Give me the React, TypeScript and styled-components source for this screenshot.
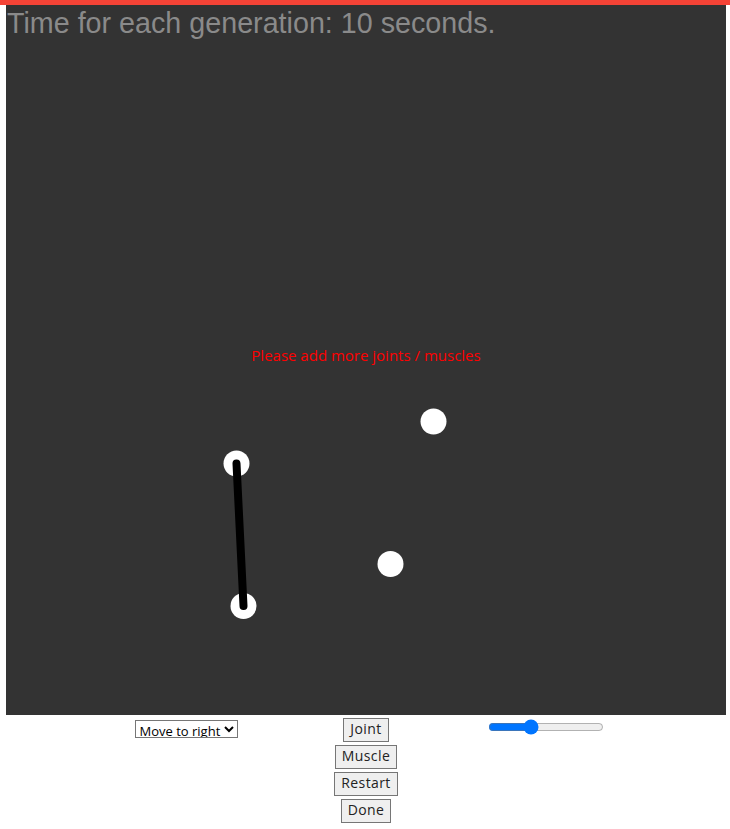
import React, { useState } from 'react';
import styled, { createGlobalStyle } from 'styled-components';

const GlobalStyle = createGlobalStyle`
  html, body {
    margin: 0;
    padding: 0;
    background: #fff;
  }
`;

interface IJoint {
  x: number;
  y: number;
}

// canvas coordinates (stage origin is at page 6,5)
const joints: IJoint[] = [
  { x: 230.5, y: 458.5 },
  { x: 237.5, y: 601 },
  { x: 427.5, y: 416.5 },
  { x: 384.5, y: 559 },
];

const muscles: [number, number][] = [[0, 1]];

export default function App(): JSX.Element {
  const [goal, setGoal] = useState('right');
  const [speed, setSpeed] = useState(35);

  return (
    <Page>
      <GlobalStyle />
      <TopBar />
      <StageWrapper>
        <Stage>
          <Drawing width={720} height={710}>
            {joints.map((j, i) => (
              <circle key={i} cx={j.x} cy={j.y} r={13} fill="#fff" />
            ))}
            {muscles.map(([a, b]) => (
              <line
                key={`${a}-${b}`}
                x1={joints[a].x}
                y1={joints[a].y}
                x2={joints[b].x}
                y2={joints[b].y}
                stroke="#000"
                strokeWidth={8}
                strokeLinecap="round"
              />
            ))}
          </Drawing>
          <Title>Time for each generation: 10 seconds.</Title>
          <Message>Please add more joints / muscles</Message>
        </Stage>
      </StageWrapper>
      <Controls>
        <Column>
          <GoalSelect value={goal} onChange={e => setGoal(e.target.value)}>
            <option value="right">Move to right</option>
            <option value="left">Move to left</option>
            <option value="jump">Jump</option>
          </GoalSelect>
        </Column>
        <ButtonStack>
          <ToolButton>Joint</ToolButton>
          <ToolButton>Muscle</ToolButton>
          <ToolButton>Restart</ToolButton>
          <ToolButton>Done</ToolButton>
        </ButtonStack>
        <Column>
          <Slider
            type="range"
            min={0}
            max={100}
            value={speed}
            onChange={e => setSpeed(Number(e.target.value))}
          />
        </Column>
      </Controls>
    </Page>
  );
}

const Page = styled.div`
  width: 730px;
  min-height: 829px;
  font-family: 'Open Sans', 'Liberation Sans', sans-serif;
`;

const TopBar = styled.div`
  height: 5px;
  background-color: #f44336;
`;

const StageWrapper = styled.div`
  padding-left: 6px;
`;

const Stage = styled.div`
  position: relative;
  width: 720px;
  height: 710px;
  background-color: #333333;
  display: flex;
  flex-direction: column;
`;

const Drawing = styled.svg`
  position: absolute;
  top: 0;
  left: 0;
  pointer-events: none;
`;

const Title = styled.div`
  position: relative;
  font-family: 'Liberation Sans', Arial, sans-serif;
  font-size: 28.7px;
  line-height: 36px;
  color: #8a8a8a;
  padding-left: 1px;
  white-space: nowrap;
`;

const Message = styled.div`
  position: relative;
  margin-top: 304px;
  text-align: center;
  font-family: 'Open Sans', 'Liberation Sans', sans-serif;
  font-size: 15px;
  line-height: 20px;
  color: #ff0000;
`;

const Controls = styled.div`
  width: 540px;
  margin: 0 auto;
  padding-left: 2px;
  display: grid;
  grid-template-columns: repeat(3, 180px);
  align-items: start;
`;

const Column = styled.div`
  display: flex;
  justify-content: center;
`;

const ButtonStack = styled.div`
  display: flex;
  flex-direction: column;
  align-items: center;
  gap: 3px;
  padding-top: 3px;
`;

const GoalSelect = styled.select`
  margin-top: 5px;
  height: 18px;
  padding: 0;
  border: 1px solid #767676;
  border-radius: 0;
  background: #fff;
  color: #000;
  font-family: 'Open Sans', 'Liberation Sans', sans-serif;
  font-size: 13px;
`;

const ToolButton = styled.button`
  height: 24px;
  padding: 0 6px 2px;
  background-color: #efefef;
  border: 1px solid #767676;
  border-radius: 0;
  color: #222;
  font-family: 'Open Sans', 'Liberation Sans', sans-serif;
  font-size: 14px;
  letter-spacing: 0.4px;
  line-height: 18px;
`;

const Slider = styled.input`
  margin-top: 4px;
  width: 116px;
  accent-color: #0075ff;
`;
